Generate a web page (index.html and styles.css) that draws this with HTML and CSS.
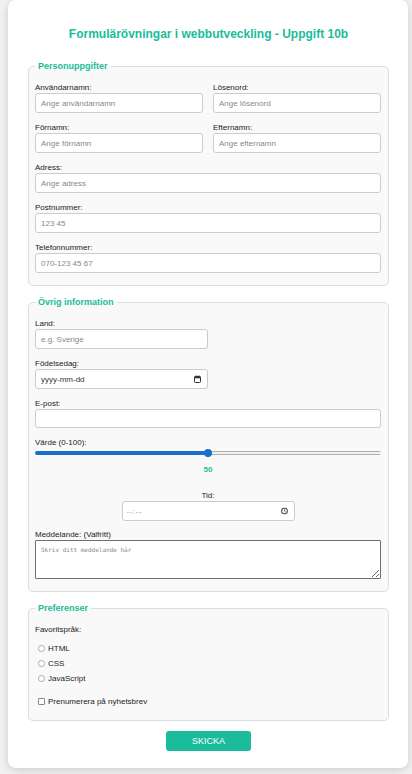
FILE: index.html
```html
<!DOCTYPE html>
<html lang="sv">
<head>
<meta charset="utf-8">
<meta name="viewport" content="width=device-width, initial-scale=1">
<title>Formulärövningar - Uppgift 10b</title>
<link rel="stylesheet" href="styles.css">
</head>
<body>
<form class="card" action="#" method="post">
  <h1 class="title">Formulärövningar i webbutveckling - Uppgift 10b</h1>

  <fieldset class="section">
    <legend class="section-title">Personuppgifter</legend>
    <div class="row">
      <div class="field">
        <label class="label" for="username">Användarnamn:</label>
        <input class="input" id="username" type="text" placeholder="Ange användarnamn">
      </div>
      <div class="field">
        <label class="label" for="password">Lösenord:</label>
        <input class="input" id="password" type="password" placeholder="Ange lösenord">
      </div>
    </div>
    <div class="row">
      <div class="field">
        <label class="label" for="firstname">Förnamn:</label>
        <input class="input" id="firstname" type="text" placeholder="Ange förnamn">
      </div>
      <div class="field">
        <label class="label" for="lastname">Efternamn:</label>
        <input class="input" id="lastname" type="text" placeholder="Ange efternamn">
      </div>
    </div>
    <div class="field">
      <label class="label" for="address">Adress:</label>
      <input class="input" id="address" type="text" placeholder="Ange adress">
    </div>
    <div class="field">
      <label class="label" for="zip">Postnummer:</label>
      <input class="input" id="zip" type="text" placeholder="123 45">
    </div>
    <div class="field">
      <label class="label" for="phone">Telefonnummer:</label>
      <input class="input" id="phone" type="tel" placeholder="070-123 45 67">
    </div>
  </fieldset>

  <fieldset class="section">
    <legend class="section-title">Övrig information</legend>
    <div class="field">
      <label class="label" for="country">Land:</label>
      <input class="input input-half" id="country" type="text" placeholder="e.g. Sverige">
    </div>
    <div class="field">
      <label class="label" for="birthday">Födelsedag:</label>
      <div class="picker">
        <input class="input picker-input picker-date" id="birthday" type="text" placeholder="yyyy-mm-dd">
        <svg class="picker-icon" viewBox="0 0 7 8" width="7" height="8" aria-hidden="true">
          <rect x="0.5" y="1.5" width="6" height="6" rx="0.8" fill="none" stroke="#333" stroke-width="1"/>
          <rect x="0.5" y="1.5" width="6" height="1.8" fill="#333"/>
          <rect x="1.6" y="0.3" width="0.9" height="1.6" fill="#333"/>
          <rect x="4.5" y="0.3" width="0.9" height="1.6" fill="#333"/>
        </svg>
      </div>
    </div>
    <div class="field">
      <label class="label" for="email">E-post:</label>
      <input class="input input-email" id="email" type="email">
    </div>
    <div class="field field-range">
      <label class="label" for="value">Värde (0-100):</label>
      <input class="range" id="value" type="range" min="0" max="100" value="50">
      <output class="range-value" for="value">50</output>
    </div>
    <div class="field field-center">
      <label class="label" for="time">Tid:</label>
      <div class="picker picker-center">
        <input class="input picker-input" id="time" type="text" placeholder="--:--">
        <svg class="picker-icon" viewBox="0 0 7 7" width="7" height="7" aria-hidden="true">
          <circle cx="3.5" cy="3.5" r="2.9" fill="none" stroke="#555" stroke-width="1.1"/>
          <path d="M3.5 1.9V3.6L4.7 4.4" fill="none" stroke="#555" stroke-width="0.9"/>
        </svg>
      </div>
    </div>
    <div class="field field-last">
      <label class="label" for="message">Meddelande: (Valfritt)</label>
      <textarea class="textarea" id="message" placeholder="Skriv ditt meddelande här"></textarea>
    </div>
  </fieldset>

  <fieldset class="section">
    <legend class="section-title">Preferenser</legend>
    <div class="field">
      <span class="label">Favoritspråk:</span>
    </div>
    <div class="options">
      <label class="option"><input class="radio" type="radio" name="lang" value="html">HTML</label>
      <label class="option"><input class="radio" type="radio" name="lang" value="css">CSS</label>
      <label class="option"><input class="radio" type="radio" name="lang" value="js">JavaScript</label>
    </div>
    <div class="options options-last">
      <label class="option"><input class="checkbox" type="checkbox" name="newsletter">Prenumerera på nyhetsbrev</label>
    </div>
  </fieldset>

  <button class="submit" type="submit">SKICKA</button>
</form>
</body>
</html>
```

FILE: styles.css
```css
* {
  box-sizing: border-box;
}

body {
  margin: 0;
  padding: 0 0 7px 8px;
  background: #f2f2f2;
  font-family: "Liberation Sans", Arial, sans-serif;
  color: #222;
}

.card {
  width: 400px;
  padding: 20px 19px 17px 20px;
  background: #fff;
  border-radius: 8px;
  box-shadow: 0 2px 10px rgba(0, 0, 0, 0.16);
}

.title {
  margin: 7px 0 19px;
  font-size: 12px;
  line-height: 14px;
  font-weight: bold;
  text-align: center;
  color: #1abc9c;
}

/* fieldset groups */
.section {
  margin: 0 0 10px;
  padding: 10px 7px 2px 6px;
  border: 1px solid #ddd;
  border-radius: 5px;
  background: #f9f9f9;
  min-width: 0;
}

.section-title {
  padding: 0 3px;
  font-size: 9px;
  line-height: 13px;
  font-weight: bold;
  color: #1abc9c;
}

.row {
  display: grid;
  grid-template-columns: 1fr 1fr;
  column-gap: 10px;
}

.field {
  margin-bottom: 10px;
}

.field-center {
  margin-bottom: 9px;
  text-align: center;
}

.field-range {
  margin-bottom: 0;
}

.label {
  display: block;
  font-size: 8px;
  line-height: 10px;
  color: #222;
}

.input {
  display: block;
  width: 100%;
  height: 20px;
  padding: 0 5px;
  border: 1px solid #ccc;
  border-radius: 3px;
  background: #fff;
  font-family: "Liberation Sans", Arial, sans-serif;
  font-size: 8px;
  color: #333;
  outline: none;
}

.input::placeholder {
  color: #888;
}

.input-half {
  width: 50%;
}

.input-email {
  height: 19px;
}

/* date / time fields with a trailing icon */
.picker {
  position: relative;
  width: 50%;
}

.picker-center {
  margin: 0 auto;
}

.picker-input {
  padding-right: 16px;
}

.picker-date::placeholder {
  color: #333;
}

.picker-center .picker-input {
  padding-left: 4px;
}

.picker-center .picker-input::placeholder {
  color: #999;
  letter-spacing: 0.5px;
}

.picker-icon {
  position: absolute;
  right: 7px;
  top: 50%;
  transform: translateY(-50%);
  pointer-events: none;
}

/* slider */
.range {
  -webkit-appearance: none;
  appearance: none;
  display: block;
  width: 100%;
  height: 10px;
  margin: 0;
  background: transparent;
}

.range::-webkit-slider-runnable-track {
  height: 4px;
  border-radius: 2px;
  background:
    linear-gradient(to right, #1a6fc6 50%, transparent 50%),
    linear-gradient(#f0f0f0, #f0f0f0) center / 100% 2px no-repeat,
    #b0b0b0;
}

.range::-webkit-slider-thumb {
  -webkit-appearance: none;
  appearance: none;
  width: 8px;
  height: 8px;
  margin-top: -2px;
  border: none;
  border-radius: 50%;
  background: #1a6fc6;
}

.range-value {
  display: block;
  margin: 7px 0 16px;
  font-size: 8px;
  line-height: 10px;
  font-weight: bold;
  text-align: center;
  color: #1abc9c;
}

.textarea {
  display: block;
  width: 100%;
  height: 39px;
  padding: 5px;
  border: 1px solid #6f6f6f;
  border-radius: 1px;
  background: #fff;
  font-family: "DejaVu Sans Mono", "Liberation Mono", monospace;
  font-size: 6px;
  line-height: 8px;
  color: #333;
  resize: both;
  outline: none;
}

.textarea::placeholder {
  color: #8a8a8a;
}

/* radio and checkbox lists */
.options {
  margin: -4px 0 8px;
}

.options-last {
  margin: 0 0 9px;
}

.option {
  display: flex;
  align-items: center;
  height: 15px;
  font-size: 8px;
  color: #222;
}

.radio,
.checkbox {
  -webkit-appearance: none;
  appearance: none;
  flex: none;
  width: 7px;
  height: 7px;
  margin: 0 3px;
  border: 1px solid #aaa;
  background: #fff;
}

.radio {
  border-radius: 50%;
}

.checkbox {
  border-color: #888;
  border-radius: 1px;
}

.submit {
  display: block;
  width: 85px;
  height: 20px;
  margin: 0 auto;
  padding: 0;
  border: none;
  border-radius: 3px;
  background: #1abc9c;
  font-family: "Liberation Sans", Arial, sans-serif;
  font-size: 9px;
  color: #fff;
  cursor: pointer;
}
```
